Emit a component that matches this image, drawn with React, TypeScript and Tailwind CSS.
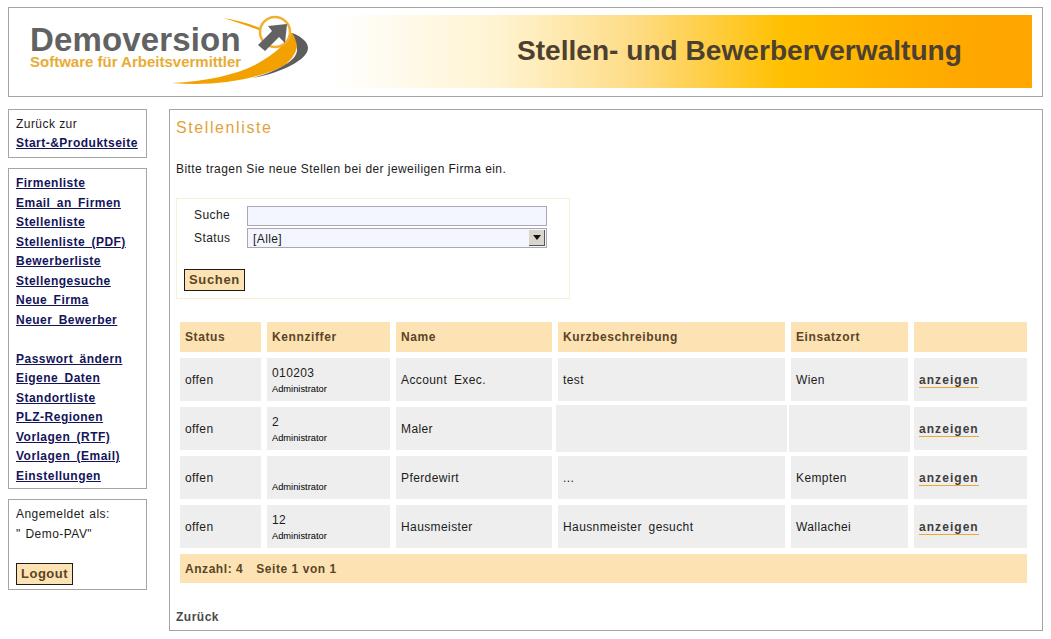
const font = { fontFamily: '"Liberation Sans", Arial, sans-serif' };

const navTop = ["Firmenliste", "Email an Firmen", "Stellenliste", "Stellenliste (PDF)", "Bewerberliste", "Stellengesuche", "Neue Firma", "Neuer Bewerber"];
const navBottom = ["Passwort ändern", "Eigene Daten", "Standortliste", "PLZ-Regionen", "Vorlagen (RTF)", "Vorlagen (Email)", "Einstellungen"];
const columns = ["Status", "Kennziffer", "Name", "Kurzbeschreibung", "Einsatzort", ""];
const jobs = [
  { code: "010203", name: "Account Exec.", text: "test", place: "Wien" },
  { code: "2", name: "Maler", text: "", place: "" },
  { code: "", name: "Pferdewirt", text: "...", place: "Kempten" },
  { code: "12", name: "Hausmeister", text: "Hausnmeister gesucht", place: "Wallachei" },
];

function NavLink({ label }: { label: string }) {
  return <a className="block h-[19.5px] text-[12px] leading-[19.5px] font-bold tracking-[0.48px] [word-spacing:2.5px] text-[#14145a] underline whitespace-nowrap">{label}</a>;
}

function Logo() {
  return (
    <div className="relative h-[73px] w-[295px] shrink-0">
      <svg className="absolute left-0 top-0" width="295" height="73" viewBox="0 0 295 73">
        <path d="M208 3 C222 5 236 9 247 14 L246 16 C234 11 221 7 208 3Z" fill="#f2a100" />
        <path d="M157 68 C195 66 230 58 250 44 C264 35 272 27 275 18 L278 18 C284 28 284 38 270 50 C245 64 200 72 157 68Z" fill="#f2a100" />
        <path d="M277 18 C288 22 293 28 293 33 C293 45 265 58 238 63 C262 56 282 46 282 35 C282 28 280 22 277 18Z" fill="#5d5d5d" />
        <circle cx="260" cy="17" r="15" fill="#fff" stroke="#f0b030" strokeWidth="2.5" />
        <path d="M272 9 L270 28 L264 22 L250 36 L243 30 L257 16 L253 11Z" fill="#626262" />
      </svg>
      <span className="absolute left-[15px] top-[12px] text-[33px] leading-[26px] font-bold tracking-[0.15px] text-[#626262] whitespace-nowrap">Demoversion</span>
      <span className="absolute left-[15px] top-[38px] text-[15px] leading-[18px] font-bold text-[#e8ac35] whitespace-nowrap">Software für Arbeitsvermittler</span>
    </div>
  );
}

function Cell({ children, empty }: { children?: React.ReactNode; empty?: boolean }) {
  return <div className={`flex flex-col justify-center bg-[#eeeeee] px-[5px] text-[12px] tracking-[0.4px] [word-spacing:3px] text-[#1c1c1c] ${empty ? "-mx-[2px] -my-[2px]" : "h-[43px]"}`}>{children}</div>;
}

export default function App() {
  return (
    <div className="h-[639px] w-[1051px] overflow-hidden bg-white px-[8px] pt-[7px]" style={font}>
      <header className="flex h-[90px] w-[1035px] items-start border border-[#a5a5a5] bg-white pl-[6px] pr-[10px] pt-[7px]">
        <div className="flex h-[73px] w-full items-center bg-[linear-gradient(90deg,#ffffff_0%,#ffffff_31%,#fff3d0_47.7%,#fedc85_61%,#ffc000_75.5%,#ffa800_93%,#ffa600_100%)]">
          <Logo />
          <h1 className="ml-[207px] text-[28.1px] font-bold text-[#4d4030] whitespace-nowrap">Stellen- und Bewerberverwaltung</h1>
        </div>
      </header>

      <div className="mt-[12px] flex items-start gap-[22px]">
        <aside className="flex w-[139px] shrink-0 flex-col gap-[10px]">
          <div className="h-[49px] border border-[#a5a5a5] px-[7px] pt-[4px]">
            <div className="h-[20px] text-[12px] leading-[20px] tracking-[0.45px] text-[#1c1c1c]">Zurück zur</div>
            <NavLink label="Start-&Produktseite" />
          </div>
          <nav className="h-[321px] border border-[#a5a5a5] px-[7px] pt-[5px]">
            {navTop.map((item) => <NavLink key={item} label={item} />)}
            <div className="h-[19.5px]" />
            {navBottom.map((item) => <NavLink key={item} label={item} />)}
          </nav>
          <div className="h-[91px] border border-[#a5a5a5] px-[7px] pt-[4px] text-[12px] tracking-[0.45px] [word-spacing:1px] text-[#1c1c1c]">
            <div className="h-[20px] leading-[20px]">Angemeldet als:</div>
            <div className="h-[20px] leading-[20px]">" Demo-PAV"</div>
            <button className="mt-[19px] block h-[22px] border border-[#1c1c1c] bg-[#fde3b4] px-[4px] text-[13px] font-bold tracking-[0.5px] text-[#5a4526]">Logout</button>
          </div>
        </aside>

        <main className="h-[522px] w-[874px] border border-[#a5a5a5] px-[6px] pt-[8px]">
          <h2 className="h-[20px] text-[16px] leading-[20px] tracking-[1.6px] text-[#e2a33a]">Stellenliste</h2>
          <p className="mt-[22px] h-[18px] text-[12px] leading-[18px] tracking-[0.43px] text-[#1c1c1c]">Bitte tragen Sie neue Stellen bei der jeweiligen Firma ein.</p>

          <form className="mt-[20px] h-[101px] w-[394px] border border-[#f6f0d8] px-[7px] pt-[6px]">
            <div className="flex h-[22px] items-center text-[12px] tracking-[0.4px] text-[#1c1c1c]">
              <label className="ml-[10px] w-[53px] -translate-y-px">Suche</label>
              <input className="h-[20px] w-[300px] border border-[#a9a9b5] bg-[#f4f6ff]" />
            </div>
            <div className="flex h-[22px] items-center text-[12px] tracking-[0.4px] text-[#1c1c1c]">
              <label className="ml-[10px] w-[53px]">Status</label>
              <div className="flex h-[20px] w-[300px] items-center justify-between border border-[#a9a9b5] bg-[#f4f6ff] pl-[5px] pr-px">
                <span className="translate-y-px">[Alle]</span>
                <span className="flex h-[16px] w-[16px] items-center justify-center border-r border-b border-[#555] bg-[#d8d5cc]">
                  <svg width="8" height="5" viewBox="0 0 8 5"><path d="M0 0H8L4 5Z" fill="#111" /></svg>
                </span>
              </div>
            </div>
            <button type="button" className="mt-[20px] block h-[22px] border border-[#1c1c1c] bg-[#fde3b4] px-[4px] text-[13px] font-bold tracking-[0.65px] text-[#5a4526]">Suchen</button>
          </form>

          <div className="ml-[4px] mt-[23px] grid w-[847px] grid-cols-[81px_123px_156px_227px_117px_113px] gap-[6px]">
            {columns.map((col) => (
              <div key={col} className="flex h-[30px] items-center bg-[#fde3b4] px-[5px] text-[12px] font-bold tracking-[0.6px] text-[#5a4526]">{col}</div>
            ))}
            {jobs.map((job) => (
              <div key={job.name} className="contents">
                <Cell>offen</Cell>
                <Cell>
                  <span className="mt-[2px] block h-[15px] leading-[15px]">{job.code}</span>
                  <span className="mt-[2px] block text-[9.3px] leading-[12px] tracking-normal text-black">Administrator</span>
                </Cell>
                <Cell>{job.name}</Cell>
                <Cell empty={!job.text}>{job.text}</Cell>
                <Cell empty={!job.place}>{job.place}</Cell>
                <Cell>
                  <a className="mt-[2px] w-fit border-b border-[#e8a93a] text-[12px] leading-[14px] font-bold tracking-[1.05px] text-[#3f3f3f]">anzeigen</a>
                </Cell>
              </div>
            ))}
            <div className="col-span-6 flex h-[29px] items-center gap-[13px] bg-[#fde3b4] px-[5px] text-[12px] font-bold tracking-[0.55px] text-[#5a4526]">
              <span>Anzahl: 4</span>
              <span>Seite 1 von 1</span>
            </div>
          </div>

          <a className="mt-[26px] block text-[12px] leading-[16px] font-bold tracking-[0.5px] text-[#4a4a4a]">Zurück</a>
        </main>
      </div>
    </div>
  );
}
